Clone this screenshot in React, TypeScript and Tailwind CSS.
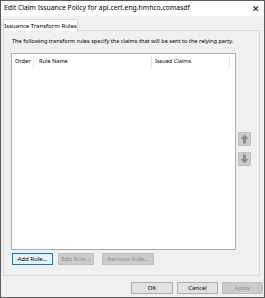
import React from 'react';

const font = { fontFamily: '"Noto Sans", "Open Sans", sans-serif' };

function ArrowBtn({ up }: { up: boolean }) {
  return (
    <div className="w-[13px] h-[14px] bg-[#cccccc] border border-[#bfbfbf] flex items-center justify-center">
      <svg width="9" height="10" viewBox="0 0 9 10" className={up ? '' : 'rotate-180'}>
        <path d="M4.5 0.5 L8.5 5 L6 5 L6 9.5 L3 9.5 L3 5 L0.5 5 Z" fill="#8a8a8a" />
      </svg>
    </div>
  );
}

function Btn({ label, width, disabled, focused }: { label: string; width: string; disabled?: boolean; focused?: boolean }) {
  const base = 'h-[12px] flex items-center justify-center text-[6px] leading-none border';
  const look = disabled
    ? 'bg-[#cccccc] border-[#bfbfbf] text-[#8d8d8d]'
    : focused
      ? 'bg-[#e5f1fb] border-[#0078d7] text-black'
      : 'bg-[#e1e1e1] border-[#adadad] text-black';
  return <div className={`${base} ${look} ${width}`}>{label}</div>;
}

export default function App() {
  return (
    <div style={font} className="w-[265px] h-[298px] border border-[#5c5c5c] bg-[#f0f0f0] flex flex-col overflow-hidden">
      {/* Title bar */}
      <div className="h-[15px] bg-white flex items-center justify-between pl-[3px] pr-[4px] shrink-0">
        <span className="text-[6.8px] leading-none text-black">Edit Claim Issuance Policy for api.cert.eng.hmhco.comasdf</span>
        <span className="text-[9px] leading-none text-black">✕</span>
      </div>

      {/* Tab strip */}
      <div className="h-[11px] mt-[3px] flex items-start pl-[2px] shrink-0">
        <div className="h-[12px] w-[75px] bg-white border border-b-0 border-[#d9d9d9] flex items-center justify-center text-[6px] leading-none relative z-10">
          Issuance Transform Rules
        </div>
      </div>

      {/* Tab panel */}
      <div className="ml-[2px] w-[257px] h-[246px] shrink-0 border border-[#d9d9d9] flex flex-col pl-[7px]">
        <div className="h-[22px] flex items-center pl-[1px] text-[5.6px] leading-none">
          The following transform rules specify the claims that will be sent to the relying party.
        </div>
        <div className="flex">
          <div className="w-[225px] h-[197px] bg-white border border-[#adadad] flex flex-col">
            <div className="h-[15px] flex items-center text-[5.6px] leading-none text-black">
              <div className="w-[22px] h-[12px] pl-[3px] border-r border-[#e5e5e5] flex items-center">Order</div>
              <div className="w-[118px] h-[12px] pl-[5px] border-r border-[#e5e5e5] flex items-center">Rule Name</div>
              <div className="w-[78px] h-[12px] pl-[3px] border-r border-[#e5e5e5] flex items-center">Issued Claims</div>
            </div>
          </div>
          <div className="ml-[2px] pt-[79px] flex flex-col gap-[6px]">
            <ArrowBtn up />
            <ArrowBtn up={false} />
          </div>
        </div>
        <div className="mt-[3px] flex pl-[1px]">
          <Btn label="Add Rule..." width="w-[41px]" focused />
          <div className="w-[5px]" />
          <Btn label="Edit Rule..." width="w-[36px]" disabled />
          <div className="w-[8px]" />
          <Btn label="Remove Rule..." width="w-[52px]" disabled />
        </div>
      </div>

      {/* Footer */}
      <div className="flex justify-end pr-[1px] mt-[6px] gap-[4px]">
        <Btn label="OK" width="w-[42px]" />
        <Btn label="Cancel" width="w-[41px]" />
        <Btn label="Apply" width="w-[41px]" disabled />
      </div>
    </div>
  );
}
